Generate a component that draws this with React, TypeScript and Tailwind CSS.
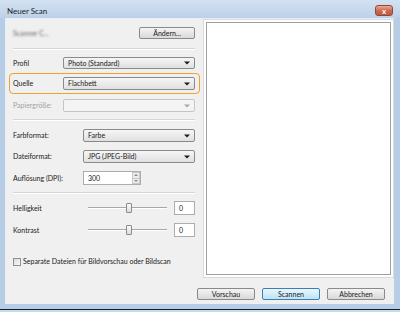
import React from 'react';

function Arrow({ disabled = false }: { disabled?: boolean }) {
  return (
    <svg width="6" height="4" viewBox="0 0 6 4" className="shrink-0">
      <path d="M0 0.5h6L3 3.5z" fill={disabled ? '#a8a8a8' : '#1a1a1a'} />
    </svg>
  );
}

function Select({ value, disabled = false, h = 'h-[13px]' }: { value?: string; disabled?: boolean; h?: string }) {
  return (
    <div
      className={`flex flex-1 items-center justify-between rounded-[2px] border pl-[4px] pr-[4px] ${h} ${
        disabled
          ? 'border-[#c5c5c5] bg-[#f4f4f4]'
          : 'border-[#8a8a8a] bg-gradient-to-b from-[#f6f6f6] to-[#e0e0e0]'
      }`}
    >
      <span className="text-[#1a1a1a]">{value}</span>
      <Arrow disabled={disabled} />
    </div>
  );
}

function Button({ label, primary = false, w = 'w-[58px]' }: { label: string; primary?: boolean; w?: string }) {
  return (
    <div
      className={`flex h-[12px] items-center justify-center rounded-[2px] border ${w} ${
        primary
          ? 'border-[#3c7fb1] bg-gradient-to-b from-[#eaf6fd] to-[#bfe3f7]'
          : 'border-[#8a8a8a] bg-gradient-to-b from-[#f4f4f4] to-[#d9d9d9]'
      }`}
    >
      <span className="text-[#1a1a1a]">{label}</span>
    </div>
  );
}

function Separator({ mt }: { mt: string }) {
  return (
    <div className={`${mt} ml-[7px] mr-[5px] border-b border-t border-b-white border-t-[#d5d5d5]`} />
  );
}

function Slider({ label, mt }: { label: string; mt: string }) {
  return (
    <div className={`${mt} flex h-[14px] items-center pl-[7px] pr-[5px]`}>
      <span className="w-[75px] text-[#1a1a1a]">{label}</span>
      <div className="relative h-[10px] w-[79px]">
        <div className="absolute left-0 right-0 top-[4px] border-b border-t border-b-white border-t-[#a8a8a8]" />
        <div className="absolute left-[38px] top-0 h-[10px] w-[6px] rounded-[1px] border border-[#8a8a8a] bg-gradient-to-b from-[#fafafa] to-[#dcdcdc]" />
      </div>
      <div className="ml-auto flex h-[14px] w-[21px] items-center border border-[#abadb3] bg-white pl-[4px] text-[#1a1a1a]">
        0
      </div>
    </div>
  );
}

export default function App() {
  return (
    <div
      className="flex h-[312px] w-[400px] flex-col bg-[#b7cde6] text-[7px] leading-none"
      style={{ fontFamily: 'Lato, "Open Sans", sans-serif' }}
    >
      {/* title bar */}
      <div className="flex h-[18px] shrink-0 items-start bg-gradient-to-b from-[#d3e2f2] to-[#bcd1e8] pl-[7px] pr-[7px]">
        <span className="mt-[7px] text-[8px] text-[#1e1e1e]">Neuer Scan</span>
        <div className="ml-auto mt-[5px] flex h-[11px] w-[18px] items-center justify-center rounded-[3px] border border-[#8b4a3a] bg-gradient-to-b from-[#e9a994] via-[#cf6a50] to-[#c0553c]">
          <span className="text-[8px] font-bold text-white">x</span>
        </div>
      </div>

      <div className="flex h-[286px] shrink-0 pl-[5px] pr-[6px]">
        <div className="flex w-[389px] flex-col border-l border-t border-[#e6eef6] bg-[#f0f0f0]">
          <div className="flex h-[259px]">
            {/* left panel */}
            <div className="flex w-[195px] flex-col">
              <div className="mt-[9px] flex h-[10px] items-center justify-between pl-[7px] pr-[5px]">
                <span className="text-[#666] blur-[1.2px]">Scanner C...</span>
                <Button label="Ändern..." w="w-[56px]" />
              </div>
              <Separator mt="mt-[10px]" />

              <div className="mt-[7px] flex h-[12px] items-center pl-[7px] pr-[5px]">
                <span className="w-[50px] text-[#1a1a1a]">Profil</span>
                <Select value="Photo (Standard)" h="h-[12px]" />
              </div>

              <div className="ml-[3px] mt-[4px] flex w-[191px] items-center rounded-[4px] border-[1.5px] border-[#f2a12a] pb-[3px] pl-[3px] pr-[4px] pt-[3px]">
                <span className="w-[50px] text-[#1a1a1a]">Quelle</span>
                <Select value="Flachbett" />
              </div>

              <div className="mt-[5px] flex h-[13px] items-center pl-[7px] pr-[5px]">
                <span className="w-[50px] text-[#a3a3a3]">Papiergröße:</span>
                <Select disabled />
              </div>

              <Separator mt="mt-[7px]" />

              <div className="mt-[8px] flex h-[13px] items-center pl-[7px] pr-[5px]">
                <span className="w-[70px] text-[#1a1a1a]">Farbformat:</span>
                <Select value="Farbe" />
              </div>
              <div className="mt-[8px] flex h-[13px] items-center pl-[7px] pr-[5px]">
                <span className="w-[70px] text-[#1a1a1a]">Dateiformat:</span>
                <Select value="JPG (JPEG-Bild)" />
              </div>
              <div className="mt-[8px] flex h-[14px] items-center pl-[7px] pr-[5px]">
                <span className="w-[70px] text-[#1a1a1a]">Auflösung (DPI):</span>
                <div className="flex h-[14px] w-[58px] border border-[#abadb3] bg-white">
                  <span className="flex-1 self-center pl-[4px] text-[#1a1a1a]">300</span>
                  <div className="flex w-[8px] flex-col">
                    <div className="flex flex-1 items-center justify-center border border-[#c8c8c8] bg-[#ececec]">
                      <svg width="4" height="2" viewBox="0 0 4 2">
                        <path d="M0 2h4L2 0z" fill="#8a8a8a" />
                      </svg>
                    </div>
                    <div className="flex flex-1 items-center justify-center border border-t-0 border-[#c8c8c8] bg-[#ececec]">
                      <svg width="4" height="2" viewBox="0 0 4 2">
                        <path d="M0 0h4L2 2z" fill="#8a8a8a" />
                      </svg>
                    </div>
                  </div>
                </div>
              </div>

              <Separator mt="mt-[7px]" />

              <Slider label="Helligkeit" mt="mt-[7px]" />
              <Slider label="Kontrast" mt="mt-[8px]" />

              <div className="mt-[20px] flex h-[9px] items-center pl-[7px]">
                <div className="h-[8px] w-[8px] border border-[#8e8f8f] bg-gradient-to-br from-[#dcdcdc] to-[#f8f8f8]" />
                <span className="ml-[2px] text-[#1a1a1a]">Separate Dateien für Bildvorschau oder Bildscan</span>
              </div>
            </div>

            {/* preview */}
            <div className="ml-[3px] flex h-[259px] w-[192px] border border-[#dadada] bg-white p-[2px]">
              <div className="flex-1 border border-[#a0a0a0] bg-white" />
            </div>
          </div>

          <div className="mt-[10px] flex justify-end gap-[7px] pr-[9px]">
            <Button label="Vorschau" />
            <Button label="Scannen" primary />
            <Button label="Abbrechen" />
          </div>
        </div>
      </div>

      <div className="h-[5px] shrink-0" />
      <div className="h-px shrink-0 bg-[#1a1a1a]" />
      <div className="flex-1 bg-[#c7dbef]" />
    </div>
  );
}
